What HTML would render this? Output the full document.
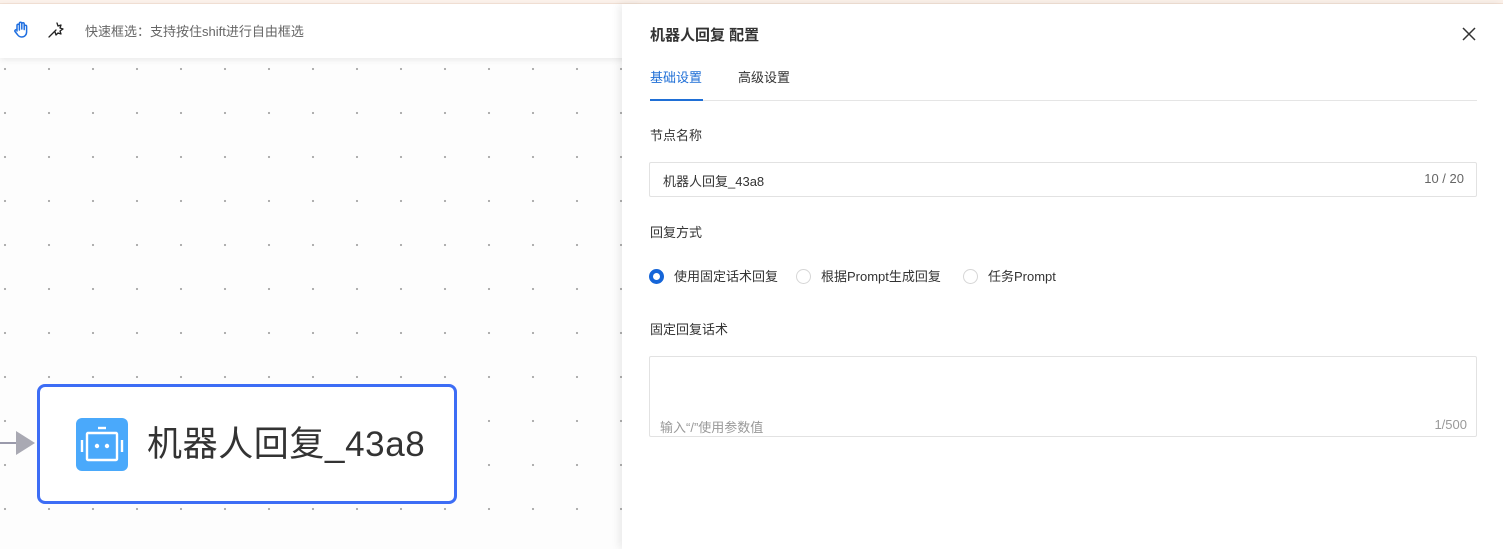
<!DOCTYPE html>
<html><head><meta charset="utf-8"><style>
*{margin:0;padding:0;box-sizing:border-box}
body{width:1503px;height:549px;overflow:hidden;position:relative;font-family:"Liberation Sans","Noto Sans CJK SC",sans-serif;color:#333;
background-color:#fdfdfd;background-image:radial-gradient(circle,#a8a8a8 0.9px,transparent 1.3px);background-size:44px 44px;background-position:-17px 47px}
.topline{position:absolute;left:0;top:0;width:1503px;height:4px;background:#fbf1ea;border-bottom:1px solid #f3e2d6}
.bar{position:absolute;left:0;top:4px;width:640px;height:54px;background:#fff;box-shadow:0 2px 6px rgba(0,0,0,.08)}
.bar .t{position:absolute;left:85px;top:17px;font-size:13px;color:#666}
.node{position:absolute;left:37px;top:384px;width:420px;height:120px;border:3px solid #3d6df5;border-radius:8px;background:#fff}
.ico{position:absolute;left:36px;top:31px;width:52px;height:53px;background:#4aa9fb;border-radius:6px}
.node .nt{position:absolute;left:107px;top:29px;font-size:35px;color:#333;letter-spacing:0.6px}
.panel{position:absolute;left:622px;top:4px;width:881px;height:545px;background:#fff;box-shadow:-3px 0 8px rgba(0,0,0,.08)}
.p{position:absolute;font-size:13px}
.inp{position:absolute;border:1px solid #e2e2e2;border-radius:2px;background:#fff}
.radio{position:absolute;width:15px;height:15px;border-radius:50%;border:1px solid #d6d6d6;background:#fff}
</style></head><body>
<div class="topline"></div>
<div class="bar">
<svg style="position:absolute;left:12px;top:16px" width="20" height="20" viewBox="0 0 20 20" fill="none" stroke="#1f6fe0" stroke-width="1.5" stroke-linecap="round" stroke-linejoin="round"><path d="M5 11V5.5a1.2 1.2 0 0 1 2.4 0V10M7.4 9V3.5a1.2 1.2 0 0 1 2.4 0V9M9.8 9V4a1.2 1.2 0 0 1 2.4 0v5.5M12.2 9.5V6.5a1.2 1.2 0 0 1 2.4 0V12c0 3-2.2 5-5 5-2 0-3.2-1-4.2-2.5L3 11.5a1.2 1.2 0 0 1 2-1.3"/></svg>
<svg style="position:absolute;left:47px;top:17px" width="18" height="18" viewBox="0 0 18 18" fill="none" stroke="#222" stroke-width="1.3" stroke-linecap="round" stroke-linejoin="round"><path d="M2 16l7-7"/><path d="M10 2l1 3 3-1-1 3 3 1-3 2 1 3-3-1-2 2-1-3"/></svg>
<div class="t">快速框选：支持按住shift进行自由框选</div>
</div>
<svg style="position:absolute;left:0;top:428px" width="37" height="34"><line x1="0" y1="15" x2="18" y2="15" stroke="#9a9aab" stroke-width="2"/><path d="M16 3L35 15L16 27Z" fill="#a9a9b3"/></svg>
<div class="node">
<div class="ico"><svg width="52" height="53" viewBox="0 0 52 53" fill="none" stroke="#fff" stroke-width="2.4"><line x1="22" y1="10" x2="30" y2="10"/><rect x="11" y="15" width="30" height="27" rx="1"/><line x1="6" y1="22" x2="6" y2="34"/><line x1="46" y1="22" x2="46" y2="34"/><circle cx="21" cy="28" r="2.2" fill="#fff" stroke="none"/><circle cx="31" cy="28" r="2.2" fill="#fff" stroke="none"/></svg></div>
<div class="nt">机器人回复_43a8</div>
</div>
<div class="panel">
<div class="p" style="left:28px;top:20px;font-size:15px;font-weight:bold;color:#333">机器人回复 配置</div>
<svg style="position:absolute;left:840px;top:23px" width="14" height="14" stroke="#333" stroke-width="1.5"><path d="M1 1L13 13M13 1L1 13"/></svg>
<div class="p" style="left:28px;top:63px;color:#1f6fd6">基础设置</div>
<div class="p" style="left:116px;top:63px;color:#333">高级设置</div>
<div style="position:absolute;left:28px;top:96px;width:827px;height:1px;background:#e5e5e5"></div>
<div style="position:absolute;left:28px;top:95px;width:53px;height:2px;background:#1f6fd6"></div>
<div class="p" style="left:28px;top:121px">节点名称</div>
<div class="inp" style="left:27px;top:158px;width:828px;height:35px"><span class="p" style="left:13px;top:8px">机器人回复_43a8</span><span class="p" style="right:12px;top:8px;color:#666">10 / 20</span></div>
<div class="p" style="left:28px;top:218px">回复方式</div>
<div class="radio" style="left:27px;top:265px;border:4.5px solid #1565d8"></div>
<div class="p" style="left:52px;top:262px">使用固定话术回复</div>
<div class="radio" style="left:174px;top:265px"></div>
<div class="p" style="left:199px;top:262px">根据Prompt生成回复</div>
<div class="radio" style="left:341px;top:265px"></div>
<div class="p" style="left:366px;top:262px">任务Prompt</div>
<div class="p" style="left:28px;top:315px">固定回复话术</div>
<div class="inp" style="left:27px;top:352px;width:828px;height:81px"><span class="p" style="left:10px;top:60px;color:#999">输入“/”使用参数值</span><span class="p" style="right:9px;top:60px;color:#999">1/500</span></div>
</div>
</body></html>
